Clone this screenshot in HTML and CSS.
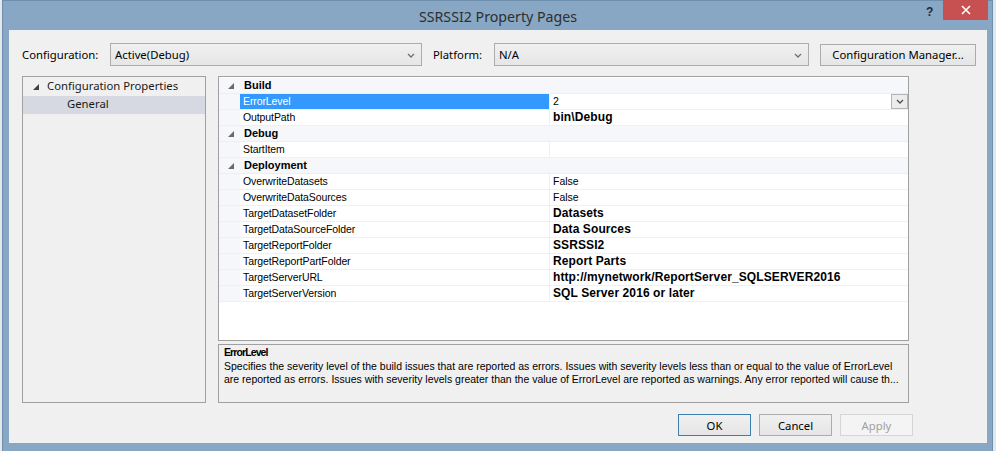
FILE: index.html
```html
<!DOCTYPE html>
<html>
<head>
<meta charset="utf-8">
<link rel="stylesheet" href="styles.css">
</head>
<body>
<div class="window">
  <div class="titlebar">
    <div class="title">SSRSSI2 Property Pages</div>
    <div class="help">?</div>
    <div class="close"><svg width="10" height="10" viewBox="0 0 10 10"><path d="M1 1L9 9M9 1L1 9" stroke="#fff" stroke-width="1.6"/></svg></div>
  </div>
  <div class="client">
    <div class="config-row">
      <div class="lbl lbl-config">Configuration:</div>
      <div class="combo combo-config"><span>Active(Debug)</span><svg class="chev" width="8" height="5" viewBox="0 0 8 5"><path d="M1 1L4 4L7 1" fill="none" stroke="#707070" stroke-width="1.3"/></svg></div>
      <div class="lbl lbl-platform">Platform:</div>
      <div class="combo combo-platform"><span>N/A</span><svg class="chev" width="8" height="5" viewBox="0 0 8 5"><path d="M1 1L4 4L7 1" fill="none" stroke="#707070" stroke-width="1.3"/></svg></div>
      <div class="btn btn-cm">Configuration Manager...</div>
    </div>
    <div class="main">
      <div class="tree">
        <div class="tree-row"><svg class="tri" width="6" height="6" viewBox="0 0 6 6"><path d="M6 0V6H0Z" fill="#404040"/></svg><span>Configuration Properties</span></div>
        <div class="tree-row tree-sel"><span>General</span></div>
      </div>
      <div class="right">
        <div class="grid">
          <div class="row cat"><div class="gut"><svg width="6" height="6" viewBox="0 0 6 6"><path d="M6 0V6H0Z" fill="#6a6a6a"/></svg></div><div class="cname">Build</div><div class="cval"></div></div>
          <div class="row prop sel"><div class="gut"></div><div class="name">ErrorLevel</div><div class="val">2<div class="ddbtn"><svg width="8" height="5" viewBox="0 0 8 5"><path d="M1 1L4 4L7 1" fill="none" stroke="#505050" stroke-width="1.4"/></svg></div></div></div>
          <div class="row prop"><div class="gut"></div><div class="name">OutputPath</div><div class="val b">bin\Debug</div></div>
          <div class="row cat"><div class="gut"><svg width="6" height="6" viewBox="0 0 6 6"><path d="M6 0V6H0Z" fill="#6a6a6a"/></svg></div><div class="cname">Debug</div><div class="cval"></div></div>
          <div class="row prop"><div class="gut"></div><div class="name">StartItem</div><div class="val"></div></div>
          <div class="row cat"><div class="gut"><svg width="6" height="6" viewBox="0 0 6 6"><path d="M6 0V6H0Z" fill="#6a6a6a"/></svg></div><div class="cname">Deployment</div><div class="cval"></div></div>
          <div class="row prop"><div class="gut"></div><div class="name">OverwriteDatasets</div><div class="val">False</div></div>
          <div class="row prop"><div class="gut"></div><div class="name">OverwriteDataSources</div><div class="val">False</div></div>
          <div class="row prop"><div class="gut"></div><div class="name">TargetDatasetFolder</div><div class="val b">Datasets</div></div>
          <div class="row prop"><div class="gut"></div><div class="name">TargetDataSourceFolder</div><div class="val b">Data Sources</div></div>
          <div class="row prop"><div class="gut"></div><div class="name">TargetReportFolder</div><div class="val b">SSRSSI2</div></div>
          <div class="row prop"><div class="gut"></div><div class="name">TargetReportPartFolder</div><div class="val b">Report Parts</div></div>
          <div class="row prop"><div class="gut"></div><div class="name">TargetServerURL</div><div class="val b">http://mynetwork/ReportServer_SQLSERVER2016</div></div>
          <div class="row prop"><div class="gut"></div><div class="name">TargetServerVersion</div><div class="val b">SQL Server 2016 or later</div></div>
        </div>
        <div class="desc">
          <div class="desc-title">ErrorLevel</div>
          <div class="desc-line">Specifies the severity level of the build issues that are reported as errors. Issues with severity levels less than or equal to the value of ErrorLevel</div>
          <div class="desc-line">are reported as errors. Issues with severity levels greater than the value of ErrorLevel are reported as warnings. Any error reported will cause th...</div>
        </div>
      </div>
    </div>
    <div class="buttons">
      <div class="btn dlg default">OK</div>
      <div class="btn dlg">Cancel</div>
      <div class="btn dlg disabled">Apply</div>
    </div>
  </div>
</div>
</body>
</html>
```

FILE: styles.css
```css
html, body {
  margin: 0;
  padding: 0;
}
body {
  width: 996px;
  height: 451px;
  overflow: hidden;
  background: #e4e8ec;
  font-family: "Noto Sans", "Liberation Sans", sans-serif;
}
.window {
  margin-left: 2px;
  width: 991px;
  height: 451px;
  box-sizing: border-box;
  border: 1px solid #6f8fae;
  border-bottom: none;
  background: #88a7c4;
  padding: 0 5px 0 6px;
  display: flex;
  flex-direction: column;
}
.titlebar {
  position: relative;
  height: 29px;
  display: flex;
  align-items: center;
  justify-content: center;
}
.title {
  font-size: 14.2px;
  color: #2e2e2e;
  margin-top: 1px;
}
.help {
  position: absolute;
  left: 917px;
  top: 4px;
  font-family: "Liberation Sans", sans-serif;
  font-weight: bold;
  font-size: 12px;
  color: #1e2a36;
}
.close {
  position: absolute;
  left: 934px;
  top: -1px;
  width: 45px;
  height: 20px;
  background: #c75050;
  display: flex;
  align-items: center;
  justify-content: center;
}
.client {
  width: 978px;
  height: 413px;
  background: #f0f0f0;
  display: flex;
  flex-direction: column;
}
.config-row {
  margin-top: 13px;
  height: 23px;
  padding-left: 13px;
  display: flex;
  align-items: center;
  font-size: 11.3px;
  color: #000;
}
.lbl-config { width: 88px; }
.lbl-platform { margin-left: 11px; width: 61px; }
.combo {
  height: 23px;
  box-sizing: border-box;
  border: 1px solid #acacac;
  background: linear-gradient(#f0f0f0, #e6e6e6);
  display: flex;
  align-items: center;
  justify-content: space-between;
  padding: 0 6px 0 4px;
}
.combo-config { width: 312px; }
.combo-platform { width: 315px; }
.chev { margin-top: 1px; }
.btn {
  height: 22px;
  box-sizing: border-box;
  border: 1px solid #acacac;
  background: linear-gradient(#f0f0f0, #e5e5e5);
  display: flex;
  align-items: center;
  justify-content: center;
  font-size: 11.3px;
  color: #000;
}
.btn-cm { margin-left: 11px; width: 156px; }
.main {
  margin-top: 10px;
  padding-left: 13px;
  display: flex;
}
.tree {
  width: 184px;
  height: 327px;
  box-sizing: border-box;
  border: 1px solid #a0a0a0;
  background: #f0f0f0;
  padding-top: 1px;
  font-size: 11.3px;
  color: #1a1a1a;
}
.tree-row {
  height: 18px;
  box-sizing: border-box;
  display: flex;
  align-items: center;
  padding-left: 10px;
  padding-bottom: 3px;
}
.tree-row .tri { margin-right: 8px; margin-top: 2px; }
.tree-sel {
  background: #d6d9e1;
  padding-left: 44px;
}
.right {
  margin-left: 12px;
  width: 691px;
  display: flex;
  flex-direction: column;
}
.grid {
  height: 265px;
  box-sizing: border-box;
  border: 1px solid #a0a0a0;
  background: #fff;
  padding-top: 1px;
  font-family: "Liberation Sans", sans-serif;
  font-size: 10.5px;
  color: #000;
}
.row {
  height: 16px;
  box-sizing: border-box;
  border-bottom: 1px solid #f0f0f0;
  display: grid;
  grid-template-columns: 21px 309px 1fr;
  line-height: 15px;
}
.gut {
  background: #f5f7fa;
  display: flex;
  align-items: center;
  justify-content: center;
  padding-left: 2px;
}
.cat { background: #f5f7fa; border-bottom-color: #eceef2; }
.cname {
  font-weight: bold;
  font-size: 11px;
  padding-left: 4px;
}
.name {
  padding-left: 3px;
  letter-spacing: -0.1px;
}
.val {
  position: relative;
  border-left: 1px solid #f0f0f0;
  padding-left: 3px;
}
.val.b {
  font-weight: bold;
  font-size: 12px;
  letter-spacing: 0.1px;
}
.sel .name {
  background: #3399ff;
  color: #fff;
}
.ddbtn {
  position: absolute;
  right: 0;
  top: 0;
  width: 17px;
  height: 15px;
  box-sizing: border-box;
  border: 1px solid #b4b4b4;
  background: #ececec;
  display: flex;
  align-items: center;
  justify-content: center;
}
.desc {
  margin-top: 3px;
  height: 59px;
  box-sizing: border-box;
  border: 1px solid #a0a0a0;
  background: #f0f0f0;
  padding: 1px 5px 0 5px;
  font-family: "Liberation Sans", sans-serif;
  font-size: 10.5px;
  line-height: 13.5px;
  color: #000;
  white-space: nowrap;
  overflow: hidden;
}
.desc-title {
  font-weight: bold;
  font-size: 10.5px;
  letter-spacing: -0.9px;
}
.desc-line {
  letter-spacing: 0;
}
.buttons {
  margin-top: 11px;
  padding-right: 74px;
  display: flex;
  justify-content: flex-end;
  gap: 8px;
}
.dlg { width: 73px; }
.default { border-color: #3c7fb1; }
.disabled {
  border-color: #d5d5d5;
  background: #f4f4f4;
  color: #a0a0a0;
}
```
